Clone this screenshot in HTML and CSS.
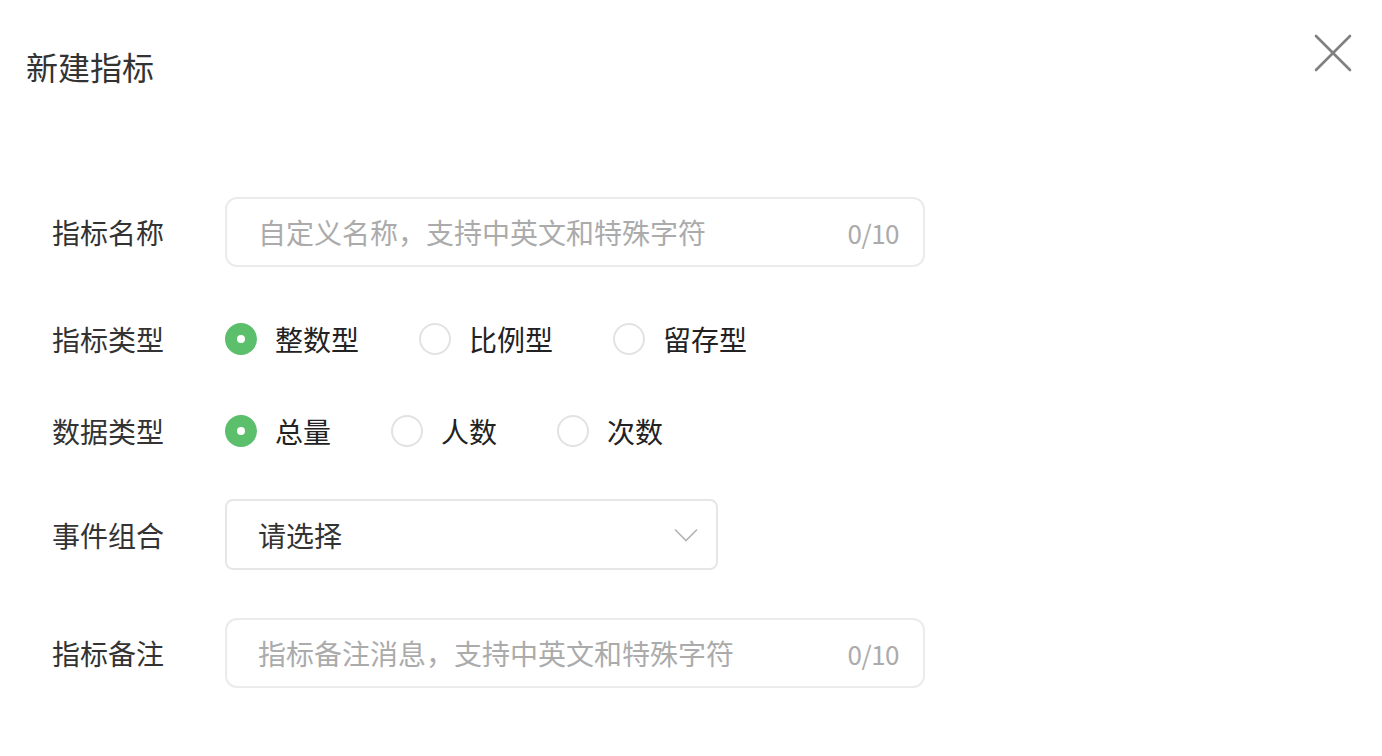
FILE: index.html
```html
<!DOCTYPE html>
<html lang="zh-CN">
<head>
    <meta charset="UTF-8">
    <meta name="viewport" content="width=device-width, initial-scale=1.0">
    <title>新建指标</title>
    <link rel="stylesheet" href="styles.css">
</head>
<body>
    <div class="dialog">
        <div class="header">
            <h1>新建指标</h1>
            <button class="close-btn" aria-label="关闭">
                <svg width="38" height="38" viewBox="0 0 38 38">
                    <path d="M2 2 L36 36 M36 2 L2 36" stroke="#808080" stroke-width="2.6" stroke-linecap="round" fill="none"/>
                </svg>
            </button>
        </div>

        <form class="form">
            <div class="form-item">
                <label class="form-label">指标名称</label>
                <div class="text-field">
                    <input type="text" placeholder="自定义名称，支持中英文和特殊字符" maxlength="10">
                    <span class="counter">0/10</span>
                </div>
            </div>

            <div class="form-item radio-item">
                <label class="form-label">指标类型</label>
                <div class="radio-group">
                    <label class="radio checked"><span class="radio-dot"></span>整数型</label>
                    <label class="radio"><span class="radio-dot"></span>比例型</label>
                    <label class="radio"><span class="radio-dot"></span>留存型</label>
                </div>
            </div>

            <div class="form-item radio-item">
                <label class="form-label">数据类型</label>
                <div class="radio-group">
                    <label class="radio checked"><span class="radio-dot"></span>总量</label>
                    <label class="radio"><span class="radio-dot"></span>人数</label>
                    <label class="radio"><span class="radio-dot"></span>次数</label>
                </div>
            </div>

            <div class="form-item select-item">
                <label class="form-label">事件组合</label>
                <div class="select">
                    <span>请选择</span>
                    <svg width="24" height="14" viewBox="0 0 24 14">
                        <path d="M1 1.5 L12 12.5 L23 1.5" stroke="#b4b4b4" stroke-width="1.6" fill="none"/>
                    </svg>
                </div>
            </div>

            <div class="form-item">
                <label class="form-label">指标备注</label>
                <div class="text-field">
                    <input type="text" placeholder="指标备注消息，支持中英文和特殊字符" maxlength="10">
                    <span class="counter">0/10</span>
                </div>
            </div>
        </form>
    </div>
</body>
</html>
```

FILE: styles.css
```css
body {
    margin: 0;
    padding: 0;
    background-color: #fff;
    font-family: "Noto Sans CJK SC", "Noto Sans", sans-serif;
    color: #333;
}
.dialog {
    width: 1382px;
    height: 756px;
}
.header {
    display: flex;
    justify-content: space-between;
    align-items: flex-start;
    padding: 34px 30px 0 26px;
}
h1 {
    margin: 12px 0 0;
    font-size: 32px;
    line-height: 40px;
    font-weight: 400;
    color: #333;
}
.close-btn {
    background: none;
    border: none;
    padding: 0;
    cursor: pointer;
    line-height: 0;
}
.form {
    padding: 111px 0 0 52px;
}
.form-item {
    display: flex;
    align-items: center;
}
.form-item + .form-item {
    margin-top: 48px;
}
.form-item.radio-item {
    margin-top: 52px;
}
.form-label {
    width: 173px;
    font-size: 28px;
    line-height: 40px;
    color: #333;
}
.text-field {
    display: flex;
    align-items: center;
    width: 700px;
    height: 70px;
    box-sizing: border-box;
    border: 2px solid #ebebeb;
    border-radius: 12px;
    padding: 0 24px 0 31px;
}
.text-field input {
    flex: 1;
    border: none;
    outline: none;
    padding: 0;
    font-family: inherit;
    font-size: 28px;
    color: #333;
    background: transparent;
}
.text-field input::placeholder {
    color: #ababab;
}
.counter {
    font-size: 26px;
    letter-spacing: -0.5px;
    color: #ababab;
}
.radio-group {
    display: flex;
    gap: 60px;
}
.radio {
    display: flex;
    align-items: center;
    gap: 18px;
    font-size: 28px;
    line-height: 40px;
    color: #222;
    cursor: pointer;
}
.radio-dot {
    width: 32px;
    height: 32px;
    box-sizing: border-box;
    border: 2px solid #e2e2e2;
    border-radius: 50%;
    position: relative;
}
.radio.checked .radio-dot {
    background-color: #5bbf6b;
    border-color: #5bbf6b;
}
.radio.checked .radio-dot::after {
    content: "";
    position: absolute;
    left: 50%;
    top: 50%;
    width: 8px;
    height: 8px;
    margin: -4px 0 0 -4px;
    border-radius: 50%;
    background: #fff;
}
.select {
    display: flex;
    align-items: center;
    justify-content: space-between;
    width: 493px;
    height: 71px;
    box-sizing: border-box;
    border: 2px solid #e6e6e6;
    border-radius: 8px;
    padding: 0 18px 0 31px;
    font-size: 28px;
    color: #333;
}
```
